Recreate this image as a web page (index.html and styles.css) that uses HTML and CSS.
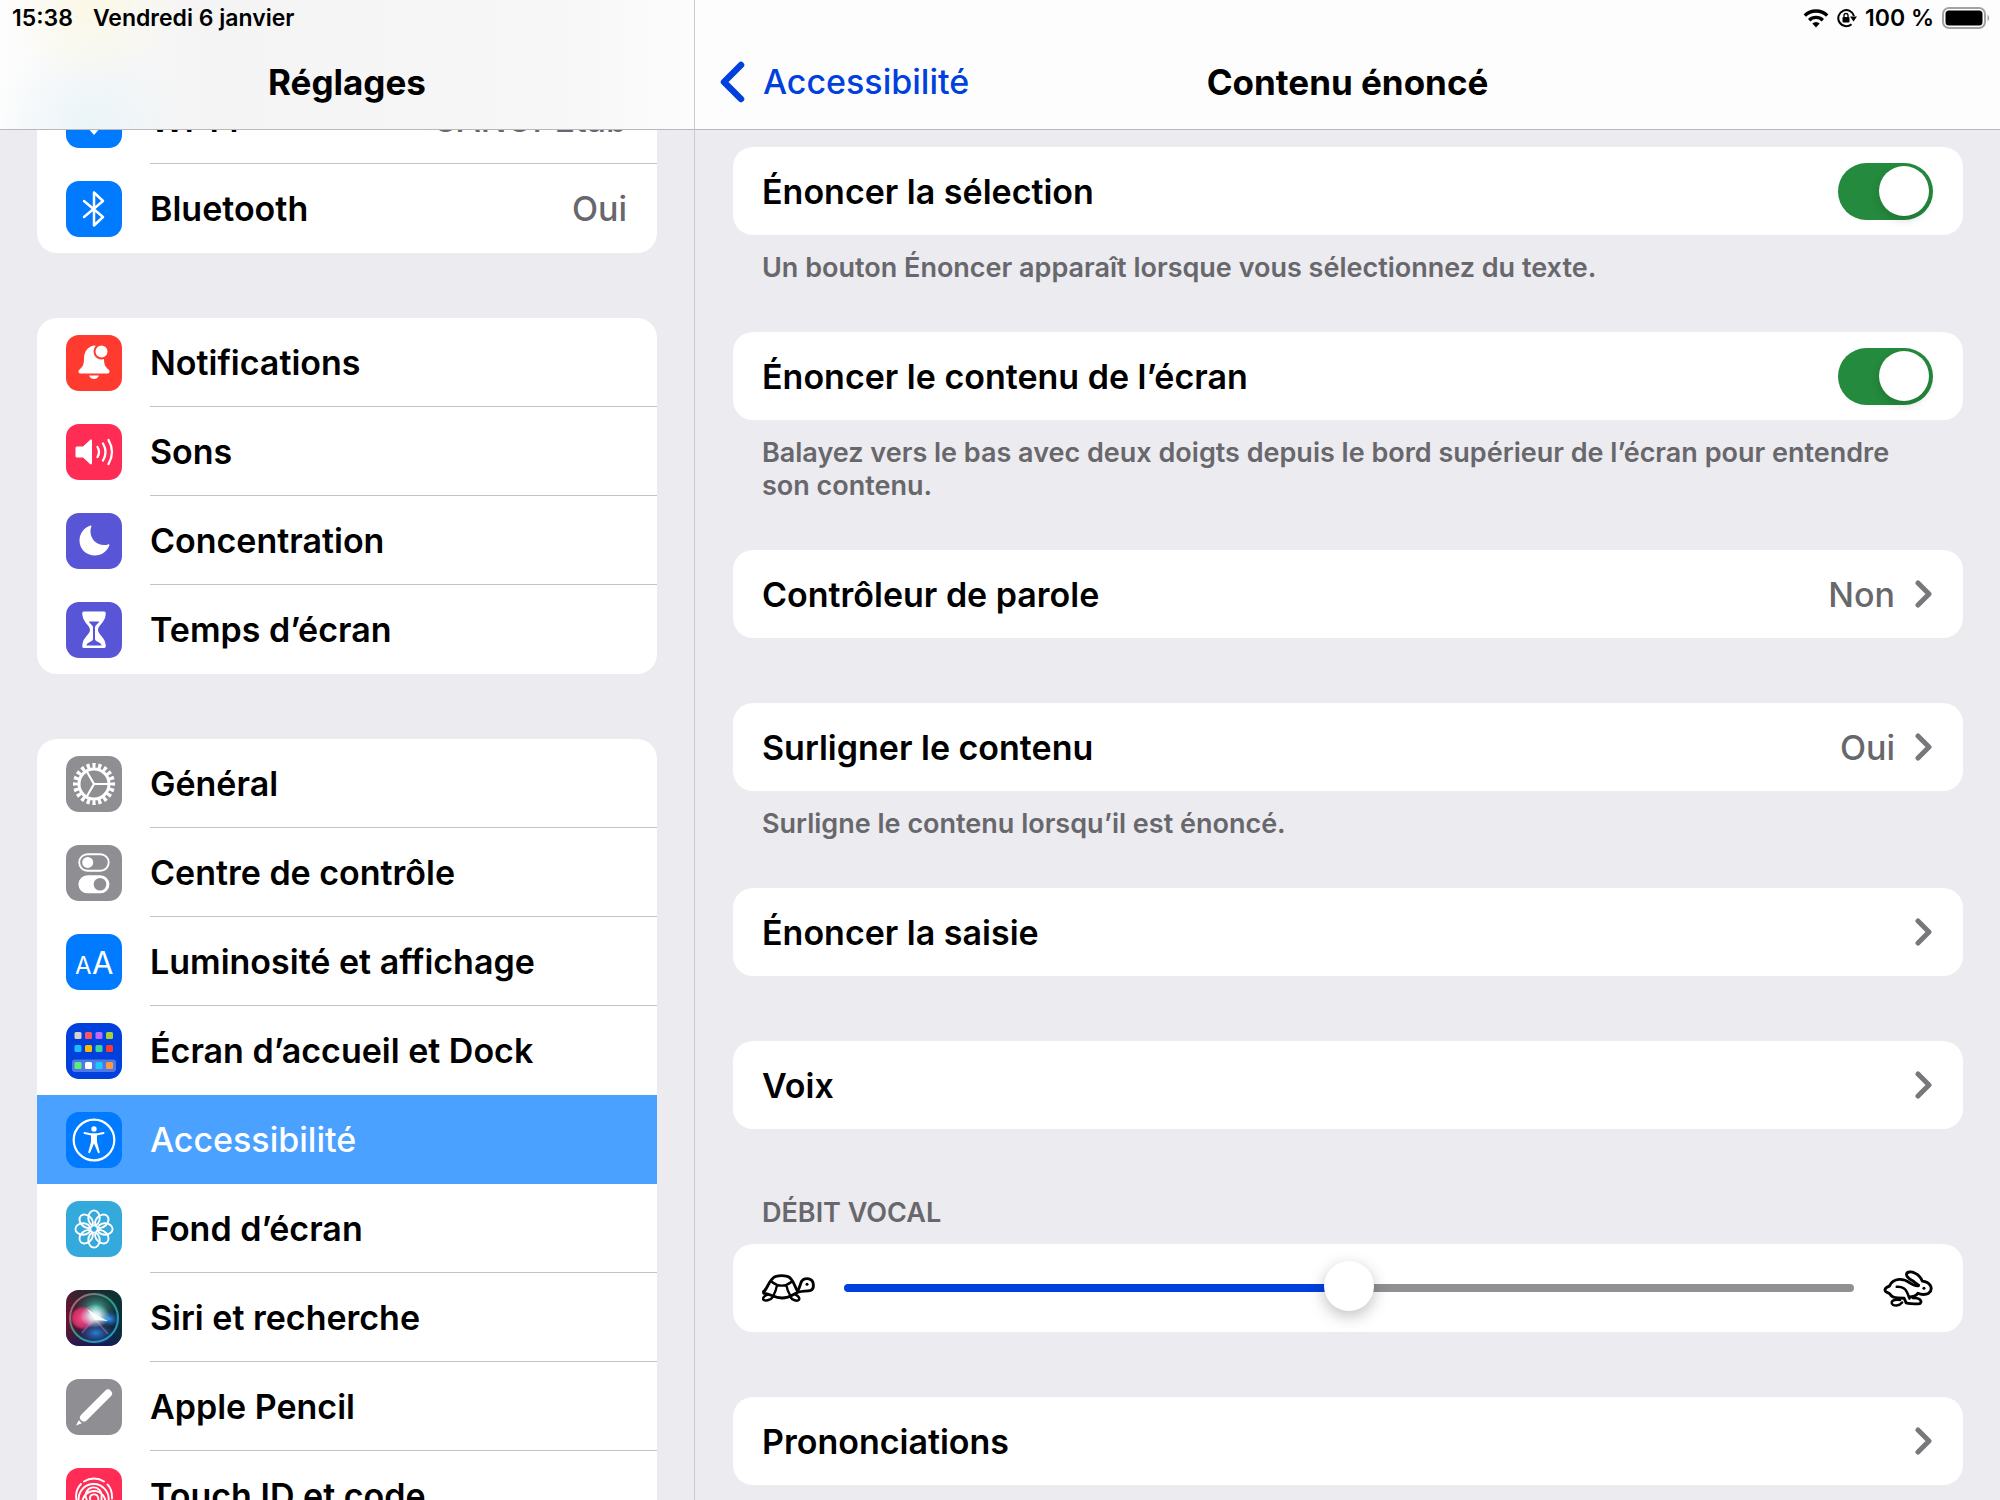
FILE: index.html
```html
<!DOCTYPE html>
<html lang="fr">
<head>
<meta charset="utf-8">
<meta name="viewport" content="width=device-width, initial-scale=1">
<title>Réglages – Contenu énoncé</title>
<link rel="stylesheet" href="styles.css">
</head>
<body>
<div class="app">
  <aside class="pane pane--side">
    <header class="bar bar--side">
      <div class="status"><time class="status__time">15:38</time><span>Vendredi 6 janvier</span></div>
      <div class="nav"><h1 class="nav__title">Réglages</h1></div>
    </header>
    <nav class="scroll menu" aria-label="Réglages">
      <ul class="list list--first">
        <li><a class="item" href="#wifi">
          <svg class="icon icon--blue" viewBox="0 0 56 56"><g fill="none" stroke="#fff" stroke-width="4"><path d="M10 23a26 26 0 0 1 36 0M16 30a17 17 0 0 1 24 0"/></g><path d="M21 35a10 10 0 0 1 14 0l-7 8z" fill="#fff"/></svg>
          <span class="item__body"><span>Wi-Fi</span><span class="value">CANOPEtab</span></span></a></li>
        <li><a class="item" href="#bluetooth">
          <svg class="icon icon--blue" viewBox="0 0 56 56"><path d="M18 20l19 16-9 8.500V11.500L37 20 18 36" fill="none" stroke="#fff" stroke-width="2.500" stroke-linejoin="round" stroke-linecap="round"/></svg>
          <span class="item__body"><span>Bluetooth</span><span class="value">Oui</span></span></a></li>
      </ul>
      <ul class="list">
        <li><a class="item" href="#notifications">
          <svg class="icon icon--red" viewBox="0 0 56 56"><path d="M28 10.500c-6 1-10 6-10 13 0 6-1 8-4.500 11-2 2-1 4 1.500 4h26c2.500 0 3.500-2 1.500-4-3.500-3-4.500-5-4.500-11 0-7-4-12-10-13z" fill="#fff"/><path d="M23 40.500h10c-1 2.500-3 3.500-5 3.500s-4-1-5-3.500z" fill="#fff"/><circle cx="35.500" cy="16.500" r="7" fill="#fff" stroke="#ff3b30" stroke-width="2"/></svg>
          <span class="item__body"><span>Notifications</span></span></a></li>
        <li><a class="item" href="#sons">
          <svg class="icon icon--pink" viewBox="0 0 56 56"><path d="M11 22.500h6l7-6.500c1-.8 2-.4 2 1v22c0 1.400-1 1.800-2 1l-7-6.500h-6q-1.500 0-1.500-1.500v-8q0-1.500 1.500-1.500z" fill="#fff"/><path d="M31.500 23q3 5 0 10M37 19.500q5 8.500 0 17M42.500 16q7 12 0 24" fill="none" stroke="#fff" stroke-width="2.300" stroke-linecap="round"/></svg>
          <span class="item__body"><span>Sons</span></span></a></li>
        <li><a class="item" href="#concentration">
          <svg class="icon icon--indigo" viewBox="0 0 56 56"><path d="M24.500 12.500C18 14.500 13.500 20.500 13.500 27.500c0 8.500 6.500 15 15.500 15 6.500 0 12-4 14.300-10 .3-1-.3-1.500-1.300-1C33 34 24.500 27.500 24.500 18.500c0-2 .3-3.500.9-5 .2-.8-.2-1.200-.9-1z" fill="#fff"/></svg>
          <span class="item__body"><span>Concentration</span></span></a></li>
        <li><a class="item" href="#temps">
          <svg class="icon icon--indigo" viewBox="0 0 56 56"><path d="M18 9.500h20c2 0 2 2 1.500 4-.8 7-7.500 10-7.500 14.500S38.700 35 39.500 42c.5 2 .5 4-1.500 4H18c-2 0-2-2-1.500-4 .8-7 7.500-9.500 7.500-14S17.300 20.500 16.500 13.500c-.5-2-.5-4 1.500-4z" fill="#fff"/><path d="M23 19.500h10c0 2-4 3.500-4 6V37c0 3 6.500 3 6.500 6.500h-15c0-3.500 6.500-3.500 6.500-6.500V25.500c0-2.500-4-4-4-6z" fill="#5856d6"/></svg>
          <span class="item__body"><span>Temps d’écran</span></span></a></li>
      </ul>
      <ul class="list">
        <li><a class="item" href="#general">
          <svg class="icon icon--gray" viewBox="0 0 56 56"><g fill="none" stroke="#fff"><circle cx="28" cy="28" r="15" stroke-width="3"/><circle cx="28" cy="28" r="18.500" pathLength="80" stroke-width="5" stroke-dasharray="2.200 1.800" stroke-dashoffset="1.100"/><path d="M28 28h15M28 28l-7.500-13M28 28l-7.500 13" stroke-width="2.200"/></g></svg>
          <span class="item__body"><span>Général</span></span></a></li>
        <li><a class="item" href="#controle">
          <svg class="icon icon--gray" viewBox="0 0 56 56"><rect x="13.200" y="9.200" width="29.500" height="16.500" rx="8.200" fill="none" stroke="#fff" stroke-width="1.900"/><circle cx="21.700" cy="17.400" r="5.500" fill="#fff"/><rect x="12.400" y="30.300" width="31" height="18" rx="9" fill="#fff"/><circle cx="34" cy="39.300" r="6.300" fill="#8e8e93"/></svg>
          <span class="item__body"><span>Centre de contrôle</span></span></a></li>
        <li><a class="item" href="#luminosite">
          <svg class="icon icon--blue" viewBox="0 0 56 56"><g fill="#fff" class="icon__letters"><text x="9" y="39.500" font-size="24">A</text><text x="26" y="39.500" font-size="31">A</text></g></svg>
          <span class="item__body"><span>Luminosité et affichage</span></span></a></li>
        <li><a class="item" href="#accueil">
          <svg class="icon icon--deep" viewBox="0 0 56 56"><rect x="6" y="36.500" width="44" height="12.500" rx="3" fill="#fff" opacity=".3"/><g><rect x="8.500" y="9" width="7" height="7" rx="1.500" fill="#d6d3cb"/><rect x="19" y="9" width="7" height="7" rx="1.500" fill="#ff5563"/><rect x="29.500" y="9" width="7" height="7" rx="1.500" fill="#bf69ff"/><rect x="40" y="9" width="7" height="7" rx="1.500" fill="#a8cf38"/><rect x="8.500" y="22" width="7" height="7" rx="1.500" fill="#1cbcff"/><rect x="19" y="22" width="7" height="7" rx="1.500" fill="#ffba00"/><rect x="29.500" y="22" width="7" height="7" rx="1.500" fill="#3ed39c"/><rect x="40" y="22" width="7" height="7" rx="1.500" fill="#ff3830"/><rect x="8.500" y="39" width="7" height="7" rx="1.500" fill="#5bf075"/><rect x="19" y="39" width="7" height="7" rx="1.500" fill="#fff"/><rect x="29.500" y="39" width="7" height="7" rx="1.500" fill="#1ccaff"/><rect x="40" y="39" width="7" height="7" rx="1.500" fill="#ff9a3c"/></g></svg>
          <span class="item__body"><span>Écran d’accueil et Dock</span></span></a></li>
        <li><a class="item item--active" href="#accessibilite" aria-current="page">
          <svg class="icon icon--blue" viewBox="0 0 56 56"><circle cx="28" cy="28" r="20.300" fill="none" stroke="#fff" stroke-width="2.200"/><circle cx="28" cy="17" r="2.700" fill="#fff"/><path d="M18.500 21l7 1.500h5l7-1.500" fill="none" stroke="#fff" stroke-width="2" stroke-linecap="round" stroke-linejoin="round"/><path d="M25 21.500h6V30l2.700 10q.2 1-.7 1.200-.9.200-1.200-.7L28 31.500l-3.800 9q-.3.900-1.200.7-.9-.2-.7-1.200L25 30z" fill="#fff"/></svg>
          <span class="item__body"><span>Accessibilité</span></span></a></li>
        <li><a class="item" href="#fond">
          <svg class="icon icon--cyan" viewBox="0 0 56 56"><defs><ellipse id="petal" cx="28" cy="17" rx="5.700" ry="7.600"/></defs><g fill="none" stroke="#fff" stroke-width="1.900"><use href="#petal"/><use href="#petal" transform="rotate(45 28 28)"/><use href="#petal" transform="rotate(90 28 28)"/><use href="#petal" transform="rotate(135 28 28)"/><use href="#petal" transform="rotate(180 28 28)"/><use href="#petal" transform="rotate(225 28 28)"/><use href="#petal" transform="rotate(270 28 28)"/><use href="#petal" transform="rotate(315 28 28)"/></g></svg>
          <span class="item__body"><span>Fond d’écran</span></span></a></li>
        <li><a class="item" href="#siri">
          <svg class="icon" viewBox="0 0 56 56"><defs>
            <linearGradient id="siriBack" x1="0" y1="0" x2="1" y2="0"><stop offset="0" stop-color="#7a0c32"/><stop offset=".5" stop-color="#2a1533"/><stop offset="1" stop-color="#06323a"/></linearGradient>
            <linearGradient id="siriFade" x1="0" y1="0" x2="0" y2="1"><stop offset="0" stop-color="#0b3b2c" stop-opacity=".5"/><stop offset=".5" stop-color="#0b3b2c" stop-opacity="0"/><stop offset="1" stop-color="#101a66" stop-opacity=".7"/></linearGradient>
            <linearGradient id="siriRing" x1="0" y1="0" x2="1" y2="1"><stop offset="0" stop-color="#c9566f"/><stop offset=".5" stop-color="#25a184"/><stop offset="1" stop-color="#2c8ee0"/></linearGradient>
            <radialGradient id="siriPink"><stop offset="0" stop-color="#ff4f8d"/><stop offset=".75" stop-color="#e0346c" stop-opacity=".85"/><stop offset="1" stop-color="#e0346c" stop-opacity="0"/></radialGradient>
            <radialGradient id="siriTeal"><stop offset="0" stop-color="#46b79a"/><stop offset="1" stop-color="#2a7f6b" stop-opacity="0"/></radialGradient>
            <radialGradient id="siriBlue"><stop offset="0" stop-color="#35a2ff"/><stop offset="1" stop-color="#1663c8" stop-opacity="0"/></radialGradient>
            <radialGradient id="siriGlow"><stop offset="0" stop-color="#fff"/><stop offset=".35" stop-color="#e9fbff" stop-opacity=".85"/><stop offset="1" stop-color="#b8f0ff" stop-opacity="0"/></radialGradient></defs>
            <rect width="56" height="56" fill="url(#siriBack)"/><rect width="56" height="56" fill="url(#siriFade)"/>
            <ellipse cx="30" cy="18" rx="21" ry="17" fill="url(#siriTeal)"/><ellipse cx="17" cy="28" rx="13" ry="12" fill="url(#siriPink)"/><ellipse cx="30" cy="43" rx="18" ry="12" fill="url(#siriBlue)" opacity=".75"/><ellipse cx="43" cy="29" rx="11" ry="8" fill="url(#siriBlue)"/>
            <path d="M28 28l14 16M28 28L16 43" stroke="#c95a9a" stroke-width="1.500" opacity=".6"/>
            <ellipse cx="29" cy="26" rx="15" ry="12" fill="url(#siriGlow)"/><path d="M21 19l9 6 12 6-13-1z" fill="#fff" opacity=".9"/>
            <circle cx="28" cy="28" r="24" fill="none" stroke="url(#siriRing)" stroke-width="2"/></svg>
          <span class="item__body"><span>Siri et recherche</span></span></a></li>
        <li><a class="item" href="#pencil">
          <svg class="icon icon--gray" viewBox="0 0 56 56"><path d="M42 14.500L18 38.500" stroke="#fff" stroke-width="8" stroke-linecap="round"/><path d="M12.800 41.200l3 3L10 46.500z" fill="#fff"/></svg>
          <span class="item__body"><span>Apple Pencil</span></span></a></li>
        <li><a class="item" href="#touchid">
          <svg class="icon icon--pink" viewBox="0 0 56 56"><g fill="none" stroke="#fff" stroke-width="1.900" stroke-linecap="round"><path d="M18 13.500a18 18 0 0 1 20 0M10.500 32a18 18 0 0 1 4.500-16M41.500 16.500q5 5 4.500 14"/><path d="M13.500 36a15 15 0 1 1 29-3M17 38a11.500 11.500 0 1 1 22-7q.3 5-1 10M20.500 41q1.500-6-.2-10.500a8 8 0 1 1 15.200-1.500q.5 8-2 14M24 43q2-7-.2-13a4.300 4.300 0 0 1 8.200-1q1.500 8-2 15"/></g></svg>
          <span class="item__body"><span>Touch ID et code</span></span></a></li>
      </ul>
    </nav>
  </aside>

  <main class="pane pane--main">
    <header class="bar">
      <div class="status status--end">
        <svg class="status__wifi" viewBox="0 0 26 20" aria-label="Wi-Fi"><g fill="none" stroke="#000" stroke-width="3.400"><path d="M1.800 7.600a16 16 0 0 1 22.400 0M6.200 12.200a9.600 9.600 0 0 1 13.600 0"/></g><path d="M9.300 15.600a5.300 5.300 0 0 1 7.400 0L13 19.500z"/></svg>
        <svg class="status__lock" viewBox="0 0 20 20" aria-label="Rotation verrouillée"><path d="M14.500 16.200A8 8 0 1 1 17 8" fill="none" stroke="#000" stroke-width="2"/><path d="M13 8.500h7l-3.500 5z"/><rect x="5.500" y="9" width="7" height="5.500" rx="1"/><path d="M7 9.500V7.500a2 2 0 0 1 4 0v2" fill="none" stroke="#000" stroke-width="1.300"/></svg>
        <span>100 %</span>
        <svg class="status__battery" viewBox="0 0 50 22" aria-label="Batterie"><rect x="1" y="1" width="42" height="20" rx="6" fill="none" stroke="#a3a3a3" stroke-width="2"/><rect x="3.500" y="3.500" width="37" height="15" rx="3.500"/><path d="M45.500 7.500q3.500 3.500 0 7z" fill="#a3a3a3"/></svg>
      </div>
      <div class="nav">
        <a class="back" href="#accessibilite"><svg class="back__chevron" viewBox="0 0 26 42"><path d="M22 4L5 21l17 17" fill="none" stroke="currentColor" stroke-width="6.500" stroke-linecap="round" stroke-linejoin="round"/></svg>Accessibilité</a>
        <h2 class="nav__title">Contenu énoncé</h2>
      </div>
    </header>
    <div class="scroll content">
      <section class="group group--note">
        <div class="card"><label for="selection">Énoncer la sélection</label><input class="switch" type="checkbox" id="selection" checked></div>
        <p class="note">Un bouton Énoncer apparaît lorsque vous sélectionnez du texte.</p>
      </section>
      <section class="group group--note">
        <div class="card"><label for="ecran">Énoncer le contenu de l’écran</label><input class="switch" type="checkbox" id="ecran" checked></div>
        <p class="note">Balayez vers le bas avec deux doigts depuis le bord supérieur de l’écran pour entendre son contenu.</p>
      </section>
      <section class="group">
        <a class="card" href="#controleur"><span>Contrôleur de parole</span><span class="value value--link">Non<svg class="chevron" viewBox="0 0 18 28"><path d="M3 3l11 11L3 25"/></svg></span></a>
      </section>
      <section class="group group--note">
        <a class="card" href="#surligner"><span>Surligner le contenu</span><span class="value value--link">Oui<svg class="chevron" viewBox="0 0 18 28"><path d="M3 3l11 11L3 25"/></svg></span></a>
        <p class="note">Surligne le contenu lorsqu’il est énoncé.</p>
      </section>
      <section class="group">
        <a class="card" href="#saisie"><span>Énoncer la saisie</span><svg class="chevron" viewBox="0 0 18 28"><path d="M3 3l11 11L3 25"/></svg></a>
      </section>
      <section class="group">
        <a class="card" href="#voix"><span>Voix</span><svg class="chevron" viewBox="0 0 18 28"><path d="M3 3l11 11L3 25"/></svg></a>
      </section>
      <section class="group">
        <h3 class="heading"><label for="debit">DÉBIT VOCAL</label></h3>
        <div class="card card--slider">
          <svg class="turtle" viewBox="68 100 159 84" aria-hidden="true"><g fill="none" stroke="#000" stroke-width="8.500" stroke-linejoin="round" stroke-linecap="round"><path d="M73 153C86 143 90 112 110 107q17-4 34 0c20 5 22 36 32 46"/><path d="M73 153v5c20 0 30 14 55 14 26 0 36-14 50-18 12-3 24-2 36-5 8-3 9-14 7-23-3-13-20-15-30-9-9 6-6 20-16 33"/><path d="M98 124q14 11 29 11t29-11M113 134q-3 16-10 29M141 134q3 16 11 29" stroke-width="7"/><path d="M86 162c-11 3-16 9-14 14 3 6 22 4 30-9M152 167c6 12 22 16 27 10 3-5-3-11-10-15" stroke-width="7.500"/></g><circle cx="203" cy="131" r="4.500"/></svg>
          <input class="slider" type="range" id="debit" min="0" max="100" value="50">
          <svg class="rabbit" viewBox="98 84 149 110" aria-hidden="true"><g fill="none" stroke="#000" stroke-width="8.500" stroke-linejoin="round" stroke-linecap="round"><path d="M176 164c12 0 20-2 26-11 9 5 24 5 32 0 8-6 9-15 5-23-5-8-15-12-24-13-4-11-14-20-23-24-10-6-24-4-24 4 0 9 10 14 18 19 7 5 13 10 18 13"/><path d="M203 131c-8 2-16-3-24-8-11-8-20-12-33-11-14 1-24 8-29 20-8 3-14 8-13 13 1 6 11 6 15 11 5 8 13 11 24 11l18 1 6 14c10 3 25 3 37 3 7 0 9-8 5-12-4-5-12-6-22-6"/><path d="M139 134c17-1 27 7 31 17 3 7 5 13 7 18M149 173c-10-2-24 0-25 7-1 7 5 10 14 10 9-1 14-5 17-9" stroke-width="7.500"/></g><circle cx="220" cy="138" r="4.500"/></svg>
        </div>
      </section>
      <section class="group">
        <a class="card" href="#prononciations"><span>Prononciations</span><svg class="chevron" viewBox="0 0 18 28"><path d="M3 3l11 11L3 25"/></svg></a>
      </section>
    </div>
  </main>
</div>
</body>
</html>
```
FILE: styles.css
```css
:root {
  --bg: #ebebf0;
  --line: #c4c4c7;
  --muted: #67676c;
  --accent: #0040dd;
}

* { box-sizing: border-box; }

body {
  margin: 0;
  background: var(--bg);
  color: #000;
  font-family: Inter, "Liberation Sans", sans-serif;
  font-size: 34px;
  font-weight: 600;
}

a { color: inherit; text-decoration: none; }
h1, h2, h3, p, ul { margin: 0; padding: 0; }
ul { list-style: none; }

.app {
  display: grid;
  grid-template-columns: 34.75% minmax(0, 1fr);
  height: 100vh;
}

.pane {
  display: flex;
  flex-direction: column;
  min-width: 0;
  min-height: 0;
}
.pane--side { border-right: 1px solid #cbcbcf; }

.scroll {
  flex: 1;
  min-height: 0;
  overflow-y: auto;
  scrollbar-width: none;
}

/* Top bars */
.bar {
  flex: none;
  background: #fdfdfd;
  border-bottom: 1px solid #b9b9bd;
}
.bar--side {
  background:
    radial-gradient(circle at 13% 0, rgba(252, 248, 225, .8), transparent 14%),
    radial-gradient(circle at 13% 100%, rgba(231, 243, 248, .8), transparent 16%),
    linear-gradient(90deg, #fdfdfd, #f4f4f4 30%, #f7f7f7 80%, #fcfcfc);
}

.status {
  display: flex;
  align-items: center;
  gap: 20px;
  height: 36px;
  padding: 0 12px;
  font-size: 23px;
  font-weight: 600;
}
.status--end {
  justify-content: flex-end;
  gap: 8px;
  padding-right: 8px;
}
.status__wifi { width: 26px; height: 20px; }
.status__lock { width: 20px; height: 20px; }
.status__battery { width: 50px; height: 22px; }

.nav {
  position: relative;
  display: flex;
  align-items: center;
  justify-content: center;
  height: 93px;
  padding-bottom: 2px;
}
.nav__title { font-size: 35px; font-weight: 700; }

.back {
  position: absolute;
  left: 24px;
  display: flex;
  align-items: center;
  gap: 18px;
  color: var(--accent);
  font-weight: 500;
}
.back__chevron { width: 26px; height: 42px; }

/* Sidebar */
.menu { padding: 0 37px; }

.list {
  margin-bottom: 65px;
  overflow: hidden;
  border-radius: 20px;
  background: #fff;
}
.list--first { margin-top: -55px; }

.item {
  display: flex;
  align-items: center;
  gap: 28px;
  height: 89px;
  padding-left: 29px;
}
.item__body {
  display: flex;
  flex: 1;
  align-items: center;
  justify-content: space-between;
  align-self: stretch;
  padding-right: 30px;
  border-bottom: 1px solid var(--line);
  white-space: nowrap;
}
li:last-child .item__body,
li:has(+ li .item--active) .item__body,
.item--active .item__body { border-bottom-color: transparent; }
.item--active { background: #4ba1ff; color: #fff; font-weight: 500; }

.icon {
  flex: none;
  width: 56px;
  height: 56px;
  border-radius: 13px;
}
.icon--blue { background: #007aff; }
.icon--red { background: #ff3b30; }
.icon--pink { background: #ff2d55; }
.icon--indigo { background: #5856d6; }
.icon--gray { background: #8e8e93; }
.icon--deep { background: #0040dd; }
.icon--cyan { background: #34aadc; }
.icon__letters { font-weight: 400; }

.value { color: var(--muted); font-weight: 500; }

/* Detail pane */
.content { padding: 17px 37px 0 38px; }

.group { margin-bottom: 65px; }
.group--note { margin-bottom: 48px; }

.card {
  display: flex;
  align-items: center;
  justify-content: space-between;
  height: 88px;
  padding: 0 30px 0 29px;
  border-radius: 20px;
  background: #fff;
}
.card--slider { gap: 29px; }

.note, .heading {
  color: var(--muted);
  font-size: 27px;
  font-weight: 600;
  line-height: 33px;
}
.note { padding: 16px 29px 0; }
.heading { padding: 2px 29px 15px; }

.value--link {
  display: flex;
  align-items: center;
  gap: 20px;
}
.chevron {
  width: 18px;
  height: 28px;
  fill: none;
  stroke: #77777c;
  stroke-width: 5;
  stroke-linecap: round;
  stroke-linejoin: round;
}

.switch {
  display: flex;
  justify-content: flex-end;
  width: 95px;
  height: 57px;
  margin: 0;
  padding: 3px 4px;
  border-radius: 29px;
  background: #8e8e93;
  appearance: none;
}
.switch:checked { background: #248a3d; }
.switch::before {
  content: "";
  width: 50px;
  height: 50px;
  border-radius: 50%;
  background: #fff;
  box-shadow: 0 4px 10px rgba(0, 0, 0, .15);
}
.switch:not(:checked) { justify-content: flex-start; }

.turtle { flex: none; width: 53px; height: 28px; }
.rabbit { flex: none; width: 50px; height: 37px; }

.slider {
  flex: 1;
  min-width: 0;
  height: 50px;
  margin: 0;
  background: transparent;
  appearance: none;
}
.slider::-webkit-slider-runnable-track {
  height: 8px;
  border-radius: 4px;
  background: linear-gradient(90deg, var(--accent) 50%, #909092 50%);
}
.slider::-webkit-slider-thumb {
  width: 50px;
  height: 50px;
  margin-top: -23px;
  border-radius: 50%;
  background: #fff;
  box-shadow: 0 5px 16px rgba(0, 0, 0, .25);
  appearance: none;
}
```
